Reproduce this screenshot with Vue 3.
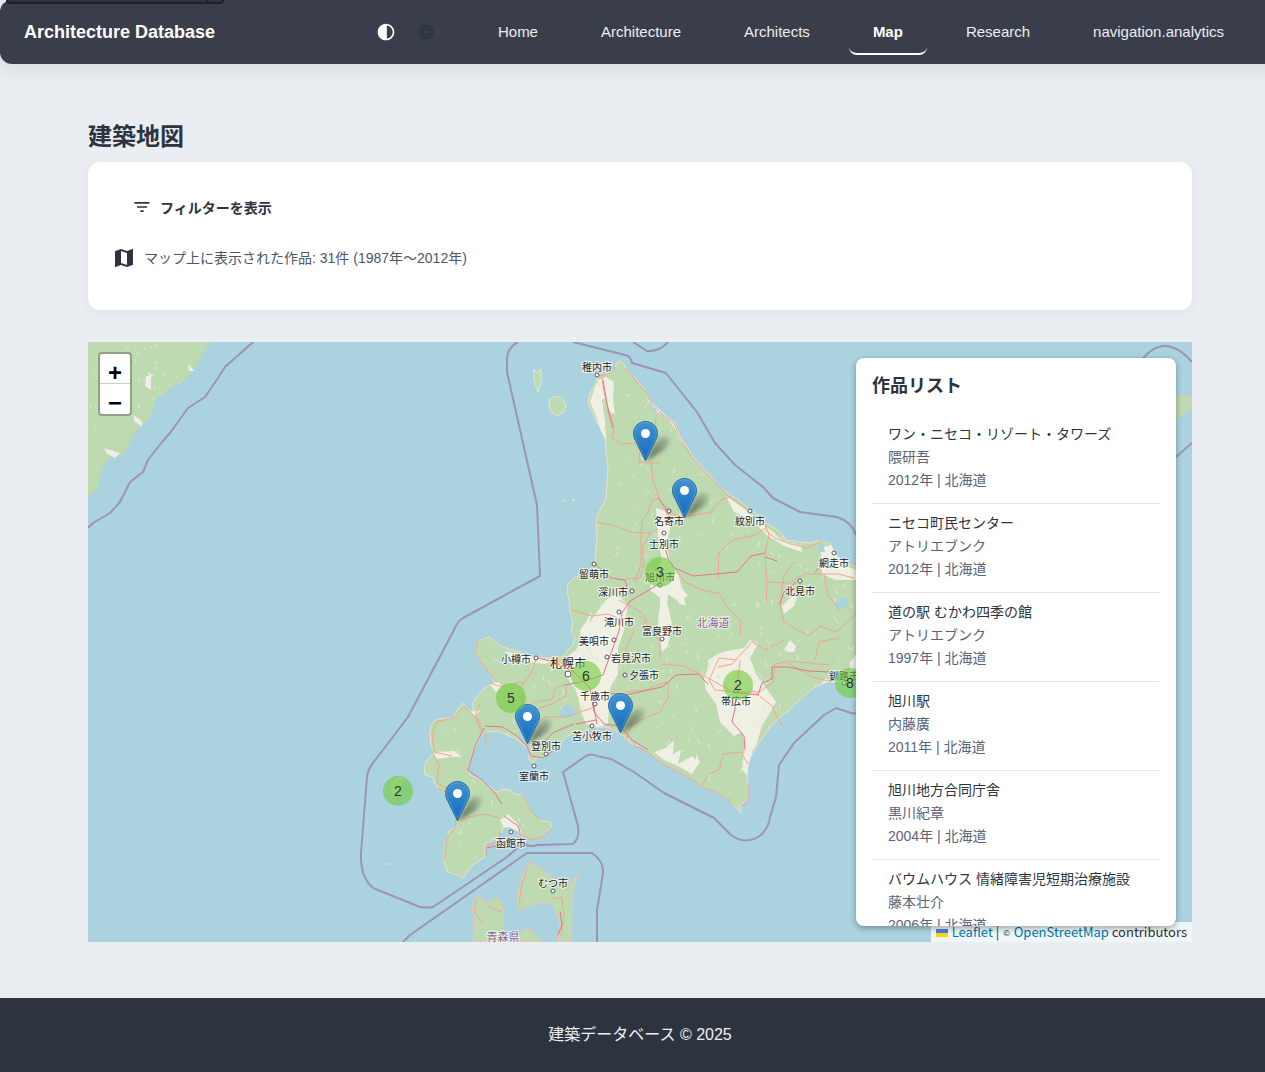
<script setup>
const navItems = ['Home', 'Architecture', 'Architects', 'Map', 'Research', 'navigation.analytics']
const active = 'Map'

const works = [
  { title: 'ワン・ニセコ・リゾート・タワーズ', architect: '隈研吾', year: 2012 },
  { title: 'ニセコ町民センター', architect: 'アトリエブンク', year: 2012 },
  { title: '道の駅 むかわ四季の館', architect: 'アトリエブンク', year: 1997 },
  { title: '旭川駅', architect: '内藤廣', year: 2011 },
  { title: '旭川地方合同庁舎', architect: '黒川紀章', year: 2004 },
  { title: 'バウムハウス 情緒障害児短期治療施設', architect: '藤本壮介', year: 2006 },
]

const pins = [[557, 79], [596, 136], [439, 362], [532, 351], [369, 439]]
const clusters = [[572, 230, 3], [498, 334, 6], [423, 356, 5], [650, 343, 2], [310, 449, 2], [762, 341, 8]]

// name, label centre x/y, dot x/y
const cities = [
  ['稚内市', 597, 367, 597, 375], ['名寄市', 669, 521, 669, 511], ['士別市', 664, 544, 664, 533],
  ['紋別市', 750, 521, 750, 511], ['留萌市', 594, 574, 594, 564], ['深川市', 613, 592, 632, 591],
  ['滝川市', 619, 622, 619, 612], ['旭川市', 660, 577, 660, 585], ['富良野市', 662, 631, 662, 639],
  ['網走市', 834, 563, 834, 553], ['北見市', 800, 591, 800, 581], ['小樽市', 516, 659, 536, 658],
  ['美唄市', 594, 641, 614, 640], ['岩見沢市', 631, 658, 607, 657], ['夕張市', 644, 675, 625, 675],
  ['千歳市', 595, 696, 595, 704], ['苫小牧市', 592, 736, 592, 726], ['登別市', 546, 746, 546, 754],
  ['室蘭市', 534, 776, 534, 766], ['函館市', 511, 843, 511, 832], ['むつ市', 553, 883, 553, 891],
  ['帯広市', 736, 701, 736, 691], ['釧路市', 844, 676, 844, 683],
]

const hokkaido = 'M620 361L624 364 626 369 631 374 637 380 643 387 648 395 651 403 662 412 669 419 675 423 678 430 680 437 687 446 693 457 702 467 710 475 718 485 727 493 737 499 747 507 756 513 763 522 772 526 780 532 786 540 800 542 810 543 817 541 824 542 830 543 833 549 835 554 843 562 856 567 870 570V676L856 680 843 682 827 682 813 688 804 696 797 702 788 711 780 717 773 724 767 732 760 741 755 750 750 758 748 767 747 778 748 787 747 800 740 805 741 813 732 803 724 796 717 792 703 787 692 779 680 773 669 767 660 762 654 756 648 752 641 746 633 745 626 739 620 733 610 728 602 727 593 727 580 732 573 733 566 737 560 743 553 749 547 753 543 758 537 758 533 763 528 758 530 754 528 748 520 742 514 738 507 735 498 731 487 732 480 735 478 742 473 753 471 760 468 767 470 775 477 778 483 782 490 787 497 792 503 789 510 790 514 794 522 795 525 802 530 810 540 820 550 822 552 828 546 832 542 837 532 840 526 837 520 832 510 827 503 827 502 832 497 837 490 842 485 843 484 858 478 861 473 865 468 870 463 878 458 875 448 872 444 862 444 850 447 837 449 831 457 827 456 817 453 807 450 797 438 788 434 782 433 777 425 775 424 765 429 758 434 753 431 745 430 733 431 725 437 719 453 718 458 709 463 703 467 709 473 712 473 703 478 695 483 690 489 685 495 683 492 675 487 670 481 661 475 653 477 643 481 640 490 637 496 642 503 647 512 650 520 652 529 657 537 657 546 658 553 658 562 657 568 650 573 645 575 638 571 632 573 622 570 613 569 600 567 592 568 584 574 578 587 573 592 567 595 562 596 550 597 535 596 519 601 508 606 498 607 482 608 468 606 452 605 438 601 430 597 422 592 412 588 402 590 393 595 385 597 377 600 374 608 374 615 368 617 362z'

const plains = [
  'M598 380l8-3 8 5-1 18 2 14-6-2-3-14-4 2 3 20 1 20-4-6-6-18-6-14 4-12z',
  'M656 508l12 4 4 10-6 22 4 16 8 16 4 14-6 10-8-6-2 30-6 10 0-36-10-8 2-16 10-12-4-24z',
  'M664 572l14 2 4 14 6 8-4 2 2 8-6-2-8-10-6-8zM662 598l6 8 4 18-4 22-6 6-2-10-2-24z',
  'M606 600l10-6 12 10-4 26-6 18 0 26-8 14-2 36-12 4-10-4-4-10-6-24-10-14 2-20 8-6 10-20 8-14z',
  'M708 660l14-8 22-4 6-8 8 4-8 14 6 16 10 14 10 14-8 14-6 10-6 20-8 10-6-24-8 4-14-14-4-18-10-14-2-12 4-10z',
  'M744 748l10-6-6 34-6-6zM820 548l14-4 8 20 14 6v10l-20 0-14-6 0-14zM800 590l-6 16-10 8-2-8 10-10z',
  'M500 820l8-6 8 8 6 10-10 0-8-4zM434 752l20-1 8 6-10 0-16 2zM505 651l28 7 22 2-10 4-20-2-14-4z',
  'M654 752l12-4 8-8-1 14 8-4-3 14 14-8 4 4 0-6 4 8-8 12-14-8-14-6z',
  'M646 398l10 8 10 12 6 2 14 28-8-10-2-8-12-16-6 0-8-10zM726 496l20 14 22 18 14 12 20 6 0 6-18-6-16-10-16-16-18-8z',
  'M822 700l-6-10 10-12 4 6-8 10zM580 630l6-8 6-12-4 22-6 12zM490 684l8-2 4 4-6 6zM470 712l10-2-4 6z',
  'M850 662l8-10v24l-8-2zM784 650l6-10 6 6-2 6-6 0z',
]

const roads = [
  'M597 376l11-2 8-7M602 378l2 14 4 16 6 18-2 12 10 6 12-1 6 7-1 12 10 1 11 0M660 412l-5 8 2 12',
  'M651 462l2 18 6 18 6 12 3 8M596 522l20 4 14 6 20 1 8-4M650 534l-8 14 2 16-4 14-14 1',
  'M669 512l12 5 14-2 16-3 10-12 10-4M660 498l-8 2-4 12-6 10-1 12 0 30-6 18M765 524l4 10-4 20 2 30-1 18',
  'M765 530l10 8 16 6 16 4 16-7M718 580l1-28 14-12 22-5 12-8M675 568l10 14 20 9 14 2 8 14 14 14-1 14',
  'M572 610l20 6 16-2 10 4M619 600l22 12 8 12M640 616l20 26 0 18M768 582l22 1 14-9 34 0 16 4',
  'M824 574l4 22 12 14M856 614l-20 18-16-6-12 10-24-14-4-18 4-28 10-14M784 640l-18 10-14-8-20 22-14 3',
  'M662 664l22 2 20 10 26 14M625 692l20-2 22-8M668 682l0 16-8 14-20 8-10 8-4 12M624 654l10-24',
  'M752 690l20 16 10 20M788 663l24 14 20 5M815 660l4-18 20-4M740 660l-2 20M703 784l6-10 10-4 4-16 8-1 14-1',
  'M737 660l-18-2-10 22 6 10 24 2 20 0 14-10 2-18 14-3 40 4M748 764l-6-10M742 806l6-6 0-16',
  'M478 640l-3 13 12 17 10 12M537 657l-7 18-8 10 0 20M490 683l12 4 20-5M522 714l30-10 14-8 0-10',
  'M452 756l-18-4-2-18 4-12 18-4 10-12 12 12 4 12 6 4 0 12M433 753l6 12-2 18 16 8',
  'M456 820l28-6 16 4M500 832l-2 10-12 4 0 10M480 704l-4 10 6 16M537 725l8-8 20 0 30-10M566 685l-10 2-4 12-20 4',
  'M528 866l-6 18-3 20M552 898l10 0 2 18-3 20M488 906l14 6M476 900l-2 12 10 12',
  'M732 803l-8-7-7-4-14-5-11-8-12-6-20-11-12-10-15-7M625 368l12 14 11 13 3 9 11 10 13 11 5 14 13 20 17 18 17 18 20 14',
  'M444 860l3-23 9-10 0-20-6-12-12-7M552 828l-10 9-10 3-16-8M522 795l8 15 10 10',
]

const motorways = [
  'M603 380l3 18 3 16 4 14M658 498l8 10 4 10M664 544l4 14 6 10M675 568l18 8 22-2 22-2 14-16 14-3M765 557l12 4',
  'M595 564l16 14 14 2 2 8M664 579l-10 8-10 6-14 8-8 12-3 18-8 22-8 22-18 6-20 4',
  'M538 658l16 4 20 10 16 16 4 24 10 12 16 2 12 14 16 10M574 724l-20 8-14 14',
  'M593 702l4 22M576 724l20-4M606 693l20 2 36-8 14-12 22-1 10 10M772 667l0 12-10 4-4 12-26-3',
  'M736 704l-4 18 12 14 1 14M772 667l16 0 20 4 22 1M780 604l4-12 12-10M815 572l8-8',
  'M485 726l18 1 14 9 10 10 4 10 12 2 16-12M484 728l-8 16-8 26 14 10 12 12 8 12M504 816l14 10 2 6M504 838l-8 8-10 2',
  'M558 935l4-10-2-14M655 569l4 8 5 4',
]

const borders = [
  'M253 342L225 367l-7 11-13 19-17 11-18 25-8 9-14 18-5 12-13 10-10 20-10 11-17 10-5 5',
  'M518 342q-10 5-11 16v14L537 505l3 71-77 42q-6 4-9 12L408 717l-35 46q-5 6-6 14l-6 76q-1 24 12 35l47 19q8 1 13 0l74-50 16-14q6 5 14 2l36-1q7-6 5-18l-15-54 20-14q7-6 14-2l14 3 23 13 30 21 20 10 30 15 17 17q15 11 30 0 8-8 9-18l6-20 3-32 15-22 30-28 12-7 15 5 9 1',
  'M403 942l7-7 117-82h65q12 8 11 20l-6 37v32',
  'M573 342l52 13q6 1 7 8l34 10 19 24 12 15 18 31 20 22 28 22 10 11 27 14 37 5q15 5 19 18',
  'M633 342l14 9q12 1 21-9M1140 362q24-32 52 0M1176 457l16-14',
]

// Small pale clearings scattered over the forest, repeatable between renders
const clearings = (() => {
  let seed = 17
  const next = () => (seed = (seed * 16807) % 2147483647) / 2147483647
  let d = ''
  for (let i = 0; i < 520; i++) {
    const x = Math.round(430 + next() * 426)
    const y = Math.round(360 + next() * 510)
    d += `M${x} ${y}l${Math.round(next() * 8 - 4)} ${Math.round(2 + next() * 4)}`
  }
  for (let i = 0; i < 30; i++) {
    d += `M${Math.round(88 + next() * 100)} ${Math.round(342 + next() * 90)}l${Math.round(next() * 4)} 3`
  }
  return d
})()
</script>

<template>
  <div class="page">
    <header class="bar">
      <div class="peek"><span></span></div>
      <a class="brand" href="#">Architecture Database</a>
      <div class="tools">
        <button type="button" aria-label="テーマ切替">
          <svg width="20" height="20" viewBox="0 0 24 24" fill="#fff"><path d="M12 22c5.52 0 10-4.48 10-10S17.52 2 12 2 2 6.480 2 12s4.480 10 10 10zm1-17.930c3.940.49 7 3.850 7 7.930s-3.050 7.440-7 7.930V4.070z" /></svg>
        </button>
        <button type="button" aria-label="言語">
          <svg width="18" height="18" viewBox="0 0 24 24" fill="#2d3440"><path d="M11.990 2C6.470 2 2 6.480 2 12s4.470 10 9.990 10C17.520 22 22 17.520 22 12S17.520 2 11.990 2zm6.930 6h-2.950c-.32-1.250-.78-2.450-1.380-3.560 1.840.63 3.370 1.910 4.330 3.560zM12 4.040c.83 1.200 1.480 2.530 1.910 3.960h-3.820c.43-1.430 1.080-2.760 1.910-3.960zM4.260 14C4.100 13.360 4 12.690 4 12s.1-1.360.26-2h3.380c-.08.66-.14 1.320-.14 2s.06 1.340.14 2H4.260zm.82 2h2.950c.32 1.250.78 2.450 1.380 3.560-1.840-.63-3.370-1.900-4.330-3.560zm2.950-8H5.080c.96-1.660 2.490-2.930 4.330-3.560C8.810 5.550 8.350 6.750 8.030 8zM12 19.960c-.83-1.200-1.480-2.530-1.910-3.960h3.820c-.43 1.430-1.080 2.760-1.910 3.960zM14.340 14H9.660c-.09-.66-.16-1.320-.16-2s.07-1.350.16-2h4.680c.09.65.16 1.320.16 2s-.07 1.340-.16 2zm.25 5.560c.6-1.110 1.060-2.310 1.380-3.560h2.950c-.96 1.650-2.490 2.930-4.330 3.560zM16.360 14c.08-.66.14-1.320.14-2s-.06-1.340-.14-2h3.380c.16.64.26 1.310.26 2s-.1 1.360-.26 2h-3.380z" /></svg>
        </button>
      </div>
      <nav>
        <a v-for="item in navItems" :key="item" href="#" :class="{ active: item === active }">{{ item }}</a>
      </nav>
    </header>

    <main>
      <h1>建築地図</h1>
      <section class="card">
        <button type="button" class="filter">
          <svg width="20" height="20" viewBox="0 0 24 24" fill="currentColor"><path d="M10 18h4v-2h-4v2zM3 6v2h18V6H3zm3 7h12v-2H6v2z" /></svg>
          フィルターを表示
        </button>
        <div class="summary">
          <svg width="24" height="24" viewBox="0 0 24 24" fill="#2d3440"><path d="m20.500 3-.16.030L15 5.100 9 3 3.360 4.900c-.21.070-.36.250-.36.480V20.500c0 .28.220.5.5.5l.16-.03L9 18.900l6 2.100 5.640-1.900c.21-.07.36-.25.36-.48V3.500c0-.28-.22-.5-.5-.5zM15 19l-6-2.110V5l6 2.110V19z" /></svg>
          <p>マップ上に表示された作品: 31件 (1987年〜2012年)</p>
        </div>
      </section>

      <section class="map">
        <div class="layer">
          <svg class="tiles" width="1104" height="600" viewBox="88 342 1104 600" aria-hidden="true">
            <defs>
              <clipPath id="island">
                <path :d="hokkaido" />
                <path d="M88 342h124l-17 26-22 19-18 13-20 32-13 25-20 11-14 29z" />
              </clipPath>
              <linearGradient id="pinFill" x1="0" y1="0" x2="0" y2="1">
                <stop offset="0" stop-color="#3f94cf" />
                <stop offset="1" stop-color="#1668bd" />
              </linearGradient>
              <linearGradient id="shade" x1="0" y1="1" x2="1" y2="0">
                <stop offset="0" stop-color="#000" stop-opacity=".6" />
                <stop offset="1" stop-color="#000" stop-opacity=".1" />
              </linearGradient>
              <filter id="soft" x="-50%" y="-50%" width="200%" height="200%"><feGaussianBlur stdDeviation="2" /></filter>
            </defs>
            <g fill="#bddab1">
              <path d="M88 342h124l-7 8-10 18-10 12-12 7-18 13-5 17-15 15-4 10-9 15-7-4-13 15-4 20-10 9z" />
              <path :d="hokkaido" stroke="#eedfcb" />
              <path d="M534 369l3 4 4-4 0 13-3 10-4-12zM549 400l5-4 8 2 4 7-2 7-7 4-7-5z" stroke="#dfe8cc" />
              <path d="M529 862l11 6 13 10 14 9 11-12-6 18-1 49h-13l2-22-8-17-12-1-20 8-3-7 3-20zM477 895l10 7 10-4 6 7 1 37h-31l2-20-3-12zM512 942l16-15 14 15z" stroke="#f3c3ae" />
              <path d="M1176 394l8 2 8-1v14l-7 4-9 8z" />
              <path d="M563 501l3-1M572 500l3 0M385 864l3 0M392 786l6-8 5 0-4 10-5 6z" stroke="#d5e2c4" stroke-width="2" />
            </g>
            <g clip-path="url(#island)">
              <path v-for="p in plains" :key="p" :d="p" fill="#f0efe3" />
              <path :d="clearings" fill="none" stroke="#dfe8cf" />
            </g>
            <path d="M104 448l16 5-5 5-8-4zM146 376l5 0 0 14-6-4zM148 372l6 4-4 2zM188 363l6 8-5 0zM134 415l8 6 0 6-8-6z" fill="#f0ece6" />
            <path d="M560 710l8-6 8 6-4 8-12-1zM518 734l8-6 3 12-8 1zM835 602l6-4 6 0 1 8-8 4-5-3zM650 406l6 3 2 6-6-4zM645 510l3 0-2 8zM817 544l6 0 2 8-5 0z" fill="#aad3df" />
            <g fill="none" stroke-linejoin="round">
              <path v-for="r in roads" :key="r" :d="r" stroke="#f2a58f" />
              <path v-for="m in motorways" :key="m" :d="m" stroke="#e5738c" />
              <path v-for="b in borders" :key="b" :d="b" stroke="#9c94b2" stroke-width="2" />
            </g>
            <g class="labels">
              <g v-for="c in cities" :key="c[0]">
                <circle :cx="c[3]" :cy="c[4]" r="2" />
                <text :x="c[1]" :y="c[2] + 4">{{ c[0] }}</text>
              </g>
              <circle cx="568" cy="674" r="3" />
              <text x="568" y="668" class="large">札幌市</text>
              <text x="713" y="627" class="region">北海道</text>
              <text x="503" y="941" class="region">青森県</text>
            </g>
          </svg>
          <button v-for="p in pins" :key="p[0]" type="button" class="pin" aria-label="作品" :style="{ left: p[0] + 'px', top: p[1] + 'px' }">
            <svg width="42" height="41" viewBox="0 0 42 41">
              <path d="M13 40l10-19q6-8 12-5 4 5-4 13z" fill="url(#shade)" filter="url(#soft)" />
              <path d="M12.500.5C5.900.5.5 5.900.5 12.500c0 2.400.7 4.500 1.900 6.800L12.500 39.800 22.600 19.300c1.200-2.300 1.900-4.400 1.900-6.800C24.500 5.900 19.100.5 12.500.5z" fill="url(#pinFill)" stroke="#2a70a8" />
              <path d="M12.500 1.700C6.500 1.700 1.700 6.500 1.700 12.500c0 2.200.7 4.200 1.800 6.300l9 18.200 9-18.200c1.100-2.100 1.800-4.100 1.800-6.300 0-6-4.800-10.800-10.800-10.800z" fill="none" stroke="#fff" opacity=".15" />
              <circle cx="12.500" cy="12.500" r="4.500" fill="#fff" />
            </svg>
          </button>
          <button v-for="c in clusters" :key="c[0]" type="button" class="cluster" :style="{ left: c[0] + 'px', top: c[1] + 'px' }">{{ c[2] }}</button>
        </div>

        <div class="zoom">
          <button type="button" aria-label="Zoom in">+</button>
          <button type="button" aria-label="Zoom out">−</button>
        </div>

        <div class="credit">
          <svg width="12" height="8" viewBox="0 0 12 8"><path fill="#4c7be1" d="M0 0h12v4H0z" /><path fill="#ffd500" d="M0 4h12v4H0z" /></svg>
          <a href="#">Leaflet</a> | <small>©</small> <a href="#">OpenStreetMap</a> contributors
        </div>

        <aside class="panel">
          <h2>作品リスト</h2>
          <ul>
            <li v-for="w in works" :key="w.title">
              <a href="#">{{ w.title }}</a>
              <p class="architect">{{ w.architect }}</p>
              <p>{{ w.year }}年 | 北海道</p>
            </li>
          </ul>
        </aside>
      </section>
    </main>

    <footer>建築データベース © 2025</footer>
  </div>
</template>

<style>
html { overflow: hidden auto; scrollbar-width: none; }
body { background: #eaeef3; overflow-x: hidden; }
</style>

<style scoped>
.page {
  width: calc(100% + 15px);
  color: #2d3440;
  font-family: "Liberation Sans", "Noto Sans CJK JP", sans-serif;
  font-size: 14px;
}
.page * { box-sizing: border-box; }
button { padding: 0; border: 0; background: none; color: inherit; font: inherit; cursor: pointer; }
a { color: inherit; text-decoration: none; }
h1, h2, p, ul { margin: 0; padding: 0; }
ul { list-style: none; }

.bar {
  position: relative;
  display: flex;
  align-items: center;
  height: 64px;
  padding: 0 32px 0 24px;
  border-radius: 12px;
  background: #3a3d4a;
  color: #fff;
  box-shadow: 0 4px 20px rgba(0, 0, 0, .1);
}
.peek {
  position: absolute;
  top: 0;
  left: 6px;
  width: 218px;
  height: 4px;
  border: 2px solid #1d202d;
  border-top: 0;
  border-radius: 0 0 4px 4px;
  background: #303340;
}
.peek span { display: block; width: 200px; height: 2px; border-right: 2px solid #1d202d; }
.brand { font-size: 18px; font-weight: 700; }
.tools { display: flex; margin-left: auto; margin-right: 28px; }
.tools button { display: grid; place-items: center; width: 40px; height: 40px; }
nav { display: flex; gap: 15px; }
nav a {
  padding: 2px 24px 0;
  border-bottom: 2px solid transparent;
  border-radius: 8px;
  font-size: 15px;
  line-height: 42px;
  color: #eceef2;
}
nav a.active { border-color: transparent transparent #fff; color: #fff; font-weight: 700; }

main { max-width: 1200px; margin: 0 auto; padding: 56px 48px; }
h1 { font-size: 24px; line-height: 34px; margin-bottom: 8px; }
.card {
  height: 148px;
  padding: 24px;
  border-radius: 12px;
  background: #fff;
  box-shadow: 0 2px 12px rgba(0, 0, 0, .05);
}
.filter { display: flex; align-items: center; gap: 8px; height: 42px; padding: 0 20px; font-weight: 700; }
.summary { display: flex; align-items: center; gap: 8px; margin-top: 18px; color: #4c566a; }
.summary p { line-height: 24px; }

.map { position: relative; height: 600px; margin-top: 32px; overflow: hidden; background: #aad3df; }
.layer { position: absolute; top: 0; left: 50%; width: 1104px; height: 600px; margin-left: -552px; }
.tiles { display: block; }
.labels { font-size: 10px; text-anchor: middle; fill: #222; }
.labels text { stroke: rgba(255, 255, 255, .7); stroke-width: 2px; paint-order: stroke; }
.labels circle { fill: #fff; stroke: #555; stroke-width: 1px; }
.labels .large { font-size: 12px; }
.labels .region { font-size: 11px; fill: #85658f; }
.pin { position: absolute; width: 25px; height: 41px; margin-left: -12px; }
.pin svg { display: block; }
.cluster {
  position: absolute;
  width: 30px;
  height: 30px;
  margin: -15px 0 0 -15px;
  border-radius: 50%;
  background: rgba(110, 204, 57, .6);
  color: #333;
  text-align: center;
}
.zoom {
  position: absolute;
  top: 10px;
  left: 10px;
  width: 34px;
  border: 2px solid rgba(0, 0, 0, .25);
  border-radius: 4px;
  background: #fff;
  background-clip: padding-box;
}
.zoom button { display: block; width: 30px; height: 30px; padding-top: 8px; color: #000; font-size: 24px; font-weight: 700; line-height: 22px; }
.zoom button:first-child { border-bottom: 1px solid #ccc; }
.credit {
  position: absolute;
  right: 0;
  bottom: 0;
  height: 20px;
  padding: 0 5px;
  background: rgba(255, 255, 255, .8);
  color: #333;
  font-family: "Noto Sans CJK JP", sans-serif;
  font-size: 13px;
  line-height: 20px;
}
.credit svg { margin-right: 4px; }
.credit a { color: #0078a8; }
.credit small { margin: 0 1px; font-size: 8px; vertical-align: 1px; }
.panel {
  position: absolute;
  top: 16px;
  right: 16px;
  bottom: 16px;
  width: 320px;
  padding: 16px;
  overflow: hidden;
  border-radius: 8px;
  background: #fff;
  box-shadow: 0 2px 6px rgba(0, 0, 0, .35);
}
h2 { font-size: 18px; line-height: 25px; margin-bottom: 16px; }
li { padding: 7px 16px 11px; border-bottom: 1px solid #e4e7ec; line-height: 24px; }
li a { display: block; line-height: 24px; }
li p { color: #5a6478; }
li .architect { line-height: 22px; }

footer { padding: 24px; background: #2d3440; color: #eceff4; font-size: 16px; line-height: 26px; text-align: center; }
</style>
